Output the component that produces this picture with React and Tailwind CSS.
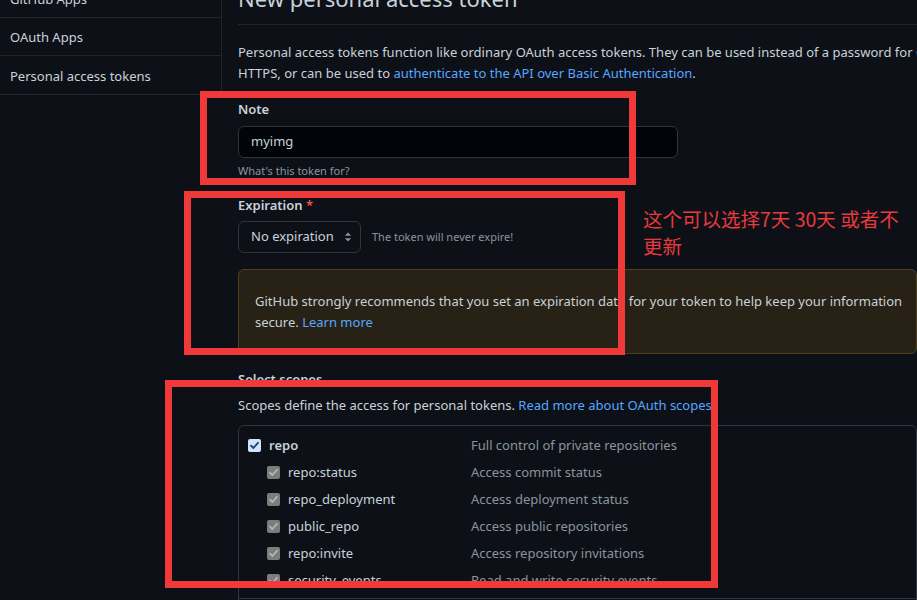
import React from "react";

const FONT = { fontFamily: '"Noto Sans", "Noto Sans CJK SC", sans-serif' };

const subScopes = [
  ["repo:status", "Access commit status"],
  ["repo_deployment", "Access deployment status"],
  ["public_repo", "Access public repositories"],
  ["repo:invite", "Access repository invitations"],
  ["security_events", "Read and write security events"],
];

const CheckBox = ({ muted }) => (
  <span
    className={`flex h-[13px] w-[13px] shrink-0 items-center justify-center rounded-[2px] ${
      muted ? "bg-[#7d7d7d]" : "bg-[#cfe3fb]"
    }`}
  >
    <svg width="11" height="11" viewBox="0 0 11 11">
      <path
        d="M2 5.6 L4.4 8 L9 2.8"
        fill="none"
        stroke={muted ? "#b5b5b5" : "#1d3f6b"}
        strokeWidth="1.8"
        strokeLinecap="round"
        strokeLinejoin="round"
      />
    </svg>
  </span>
);

const App = () => {
  return (
    <div
      className="relative h-[600px] w-[917px] overflow-hidden bg-[#0d1117] text-[13px] text-[#c9d1d9]"
      style={FONT}
    >
      <div className="-mt-[20px] flex">
        {/* settings sidebar */}
        <div className="w-[222px] shrink-0">
          <nav className="border-r border-b border-[#21262d]">
            {["GitHub Apps", "OAuth Apps", "Personal access tokens"].map((item, i) => (
              <div
                key={item}
                className={`flex h-[38px] items-center px-[10px] pt-[3px] ${
                  i < 2 ? "border-b border-[#21262d]" : ""
                }`}
              >
                {item}
              </div>
            ))}
          </nav>
        </div>

        {/* main form */}
        <div className="min-w-0 flex-1 pl-4">
          <h2 className="whitespace-nowrap border-b border-[#21262d] pb-2 text-[22px] leading-[36px]">
            New personal access token
          </h2>

          <p className="mt-[17px] whitespace-nowrap leading-[21px]">
            Personal access tokens function like ordinary OAuth access tokens. They can be used instead of a password for Git over
            <br />
            HTTPS, or can be used to{" "}
            <span className="text-[#58a6ff]">authenticate to the API over Basic Authentication</span>.
          </p>

          <div className="mt-[15px] font-semibold leading-[21px]">Note</div>
          <div className="mt-[6px] flex h-[32px] w-[440px] items-center rounded-md border border-[#30363d] bg-[#010409] px-3">
            myimg
          </div>
          <div className="mt-1 text-[11px] leading-[18px] text-[#8b949e]">What's this token for?</div>

          <div className="mt-[15px] font-semibold leading-[21px]">
            Expiration <span className="text-[#f85149]">*</span>
          </div>
          <div className="mt-[5px] flex items-center gap-[11px]">
            <div className="flex h-[32px] w-[123px] items-center justify-between rounded-md border border-[#30363d] bg-[#0d1117] pl-3 pr-[7px]">
              <span>No expiration</span>
              <svg width="10" height="14" viewBox="0 0 10 14">
                <path d="M1.8 5.8 L5 2.4 L8.2 5.8 Z M1.8 8.2 L5 11.6 L8.2 8.2 Z" fill="#8b949e" />
              </svg>
            </div>
            <span className="text-[11px] text-[#8b949e]">The token will never expire!</span>
          </div>

          <div className="mt-4 whitespace-nowrap rounded-md border border-[#4d4020] bg-[#272215] px-4 pb-5 pt-[21px] leading-[21px]">
            GitHub strongly recommends that you set an expiration date for your token to help keep your information
            <br />
            secure. <span className="text-[#58a6ff]">Learn more</span>
          </div>

          <div className="mt-[15px] font-semibold leading-[21px]">Select scopes</div>
          <p className="mt-[5px] leading-[21px]">
            Scopes define the access for personal tokens.{" "}
            <span className="text-[#58a6ff]">Read more about OAuth scopes.</span>
          </p>

          <div className="mt-[9px] rounded-md border border-[#30363d] pt-[6px]">
            <div className="flex h-[27px] items-center pl-[9px]">
              <CheckBox />
              <span className="ml-[8px] w-[202px] font-semibold">repo</span>
              <span className="text-[#8b949e]">Full control of private repositories</span>
            </div>
            {subScopes.map(([name, desc]) => (
              <div key={name} className="flex h-[27px] items-center pl-[28px]">
                <CheckBox muted />
                <span className="ml-[8px] w-[183px]">{name}</span>
                <span className="text-[#8b949e]">{desc}</span>
              </div>
            ))}
            <div className="h-[4px]" />
            <div className="h-[40px] border-t border-[#30363d]" />
          </div>
        </div>
      </div>

      {/* annotation overlays */}
      <div className="absolute left-[200px] top-[91px] h-[94px] w-[436px] border-[7px] border-[#f03a3a]" />
      <div className="absolute left-[184px] top-[191px] h-[164px] w-[441px] border-[7px] border-[#f03a3a]" />
      <div className="absolute left-[165px] top-[380px] h-[208px] w-[553px] border-[7px] border-[#f03a3a]" />
      <div
        className="absolute left-[643px] top-[205px] text-[19.5px] leading-[27px] text-[#e8393d]"
        style={{ fontFamily: '"Noto Sans CJK SC", "Noto Sans", sans-serif' }}
      >
        这个可以选择7天 30天 或者不
        <br />
        更新
      </div>
    </div>
  );
};

export default App;
